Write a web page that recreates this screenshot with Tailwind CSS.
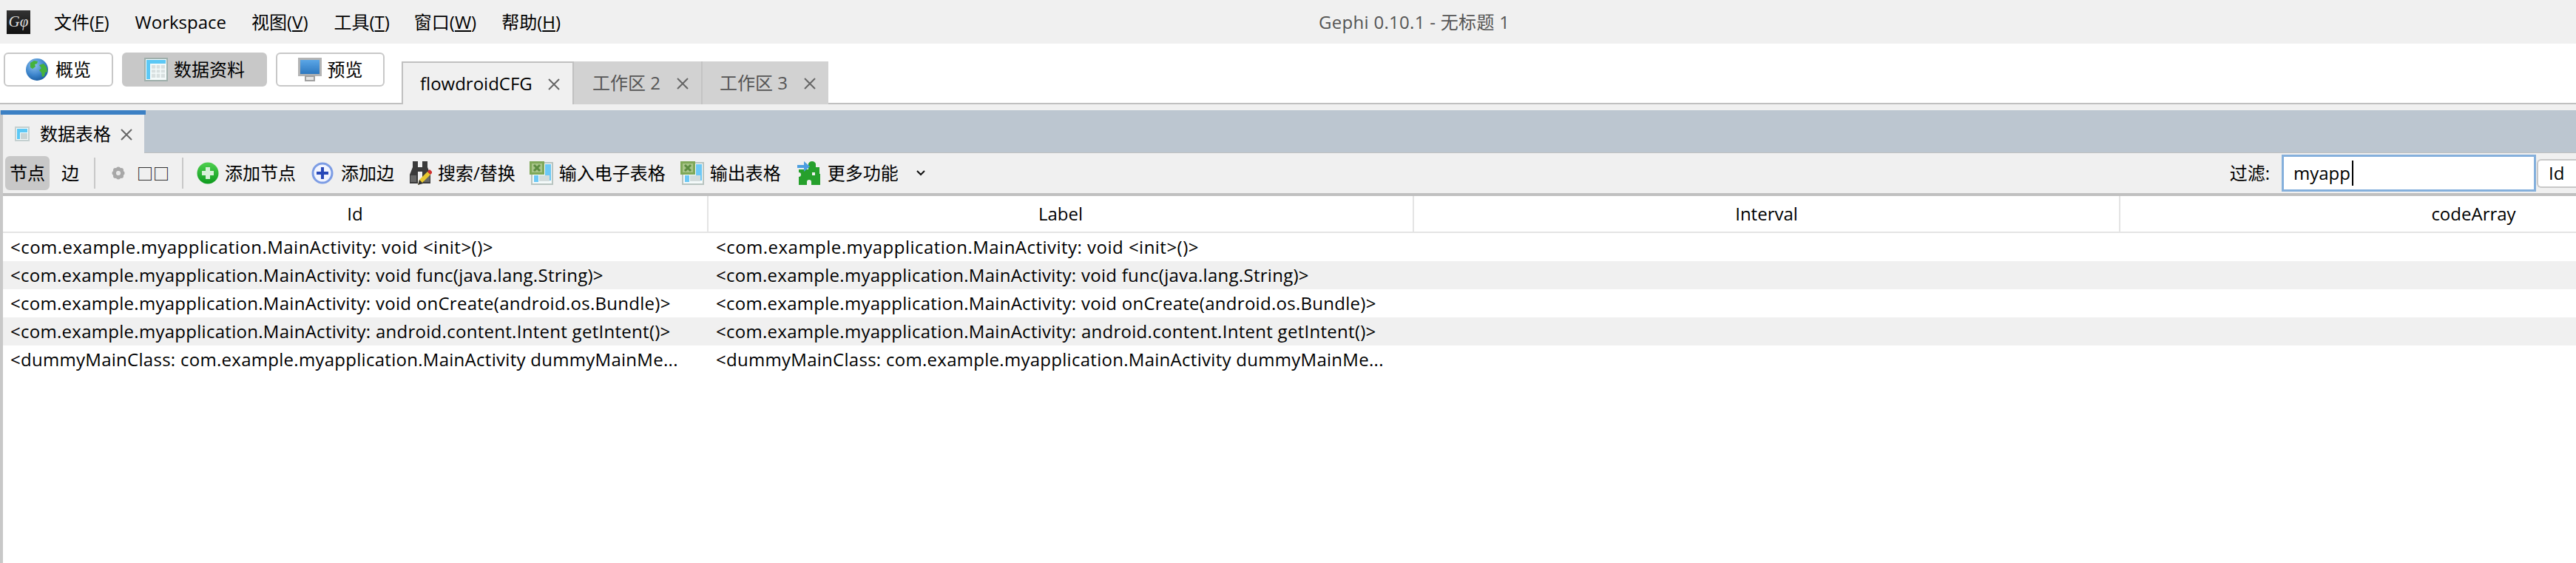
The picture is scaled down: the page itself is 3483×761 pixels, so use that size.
<!DOCTYPE html>
<html lang="zh-CN">
<head>
  <meta charset="UTF-8" />
  <script src="https://cdn.jsdelivr.net/npm/@tailwindcss/browser@4"></script>
  <title>Gephi 0.10.1 - 无标题 1</title>
</head>
<body class="bg-white h-[761px] w-[3483px] overflow-hidden text-[24px] text-black font-['Open_Sans','Noto_Sans_CJK_SC',sans-serif]">
  <!-- title bar -->
  <div class="relative flex items-center h-[59px] bg-[#f0f0f0]">
    <div class="ml-[9px] w-8 h-8 overflow-hidden bg-gradient-to-b from-[#333] to-[#111] text-[#ddd] flex items-center justify-center text-[21px] italic font-['Liberation_Serif',serif]">Gφ</div>
    <span class="ml-[32px]">文件(<u>F</u>)</span>
    <span class="ml-[35px]">Workspace</span>
    <span class="ml-[34px]">视图(<u>V</u>)</span>
    <span class="ml-[35px]">工具(<u>T</u>)</span>
    <span class="ml-[33px]">窗口(<u>W</u>)</span>
    <span class="ml-[34px]">帮助(<u>H</u>)</span>
    <span class="absolute left-[1783px] text-[#555] tracking-[0.3px]">Gephi 0.10.1 - 无标题 1</span>
  </div>

  <!-- perspective buttons and workspace tabs -->
  <div class="flex h-[82px] border-b-2 border-[#c0c0c0]">
    <div class="flex gap-3 pl-[5px] pt-3">
      <button class="flex items-center justify-center gap-[10px] w-[148px] h-[46px] rounded-md border-2 border-[#c8c8c8]">
        <svg width="30" height="30" viewBox="0 0 30 30"><defs><radialGradient id="globe" cx="38%" cy="30%" r="75%"><stop offset="0" stop-color="#8ec2ee"/><stop offset="0.6" stop-color="#3d85cc"/><stop offset="1" stop-color="#175a9e"/></radialGradient></defs><circle cx="15" cy="15" r="15" fill="url(#globe)"/><path d="M6 6l5-3 5 1-1 3-3 1 1 3-4 3-3-2zM18 9l6-2 4 5 1 6-3 1-1 5-3 1-1-6-3-3 3-3z" fill="#45b23c"/></svg>
        概览
      </button>
      <button class="flex items-center justify-center gap-2 w-[196px] h-[46px] rounded-md border-2 border-[#c8c8c8] bg-[#c8c8c8]">
        <svg width="32" height="32" viewBox="0 0 32 32"><rect width="32" height="32" fill="#9fb0ac"/><rect x="2" y="2" width="28" height="28" fill="#f4fafa"/><rect x="3" y="3" width="26" height="5" fill="#5cc8f5"/><rect x="3" y="3" width="5" height="26" fill="#5cc8f5"/><path d="M10 10h18v17H10z" fill="#d8e0e0"/><path d="M10 15.500h18M10 21h18M16 10v17M22 10v17" stroke="#f4fafa" stroke-width="1.500"/></svg>
        数据资料
      </button>
      <button class="flex items-center justify-center gap-2 w-[147px] h-[46px] rounded-md border-2 border-[#c8c8c8]">
        <svg width="32" height="32" viewBox="0 0 32 32"><defs><linearGradient id="screen" x1="0" y1="0" x2="0" y2="1"><stop offset="0" stop-color="#5ba6e6"/><stop offset="1" stop-color="#2d78c0"/></linearGradient></defs><rect y="0" width="32" height="25" fill="#b4b4b4"/><rect x="3" y="3" width="26" height="19" fill="url(#screen)"/><rect x="10" y="25" width="12" height="6" fill="#e4e4e4" stroke="#a0a0a0" stroke-width="2"/></svg>
        预览
      </button>
    </div>
    <div class="flex ml-[23px] mt-[24px] h-[58px]">
      <div class="flex items-center w-[233px] h-[58px] pl-[23px] bg-[#f0f0f0] border-2 border-b-0 border-[#c0c0c0]">
        <span>flowdroidCFG</span>
        <svg class="ml-[21px] mt-[2px]" width="16" height="16" viewBox="0 0 16 16"><path d="M1 1l14 14M15 1L1 15" stroke="#666" stroke-width="2"/></svg>
      </div>
      <div class="flex items-center w-[172px] pl-[25px] bg-[#d2d2d2] text-[#555]">
        <span>工作区 2</span>
        <svg class="ml-[22px] mt-[2px]" width="16" height="16" viewBox="0 0 16 16"><path d="M1 1l14 14M15 1L1 15" stroke="#666" stroke-width="2"/></svg>
      </div>
      <div class="flex items-center w-[172px] pl-[23px] bg-[#d2d2d2] text-[#555] border-l-2 border-[#c4c4c4]">
        <span>工作区 3</span>
        <svg class="ml-[22px] mt-[2px]" width="16" height="16" viewBox="0 0 16 16"><path d="M1 1l14 14M15 1L1 15" stroke="#666" stroke-width="2"/></svg>
      </div>
    </div>
  </div>

  <div class="h-2 bg-[#f0f0f0]"></div>

  <!-- data table panel -->
  <div class="h-[58px] bg-[#bcc6d0] border-b border-[#c0c0c0]">
    <div class="ml-[1px] w-[196px] h-[6px] bg-[#3c80c4]"></div>
    <div class="flex items-center w-[195px] h-[52px] bg-[#f0f0f0] border-l-4 border-[#c8c8c8] pl-[16px]">
      <svg width="20" height="20" viewBox="0 0 20 20"><rect width="20" height="20" fill="#c4d0d0"/><rect x="2" y="2" width="16" height="16" fill="#f4fafa"/><rect x="3" y="3" width="14" height="5" fill="#5cc8f5"/><rect x="3" y="3" width="4" height="14" fill="#5cc8f5"/><rect x="8" y="9" width="9" height="8" fill="#c8d4d4"/></svg>
      <span class="ml-[14px]">数据表格</span>
      <svg class="ml-[13px] mt-[2px]" width="16" height="16" viewBox="0 0 16 16"><path d="M1 1l14 14M15 1L1 15" stroke="#666" stroke-width="2"/></svg>
    </div>
  </div>

  <div class="border-l-4 border-[#c8c8c8] h-[554px]">
    <div class="flex items-center h-[58px] bg-[#f0f0f0] border-b-4 border-[#c0c0c0]">
      <div class="flex items-center justify-center ml-[3px] w-[60px] h-[46px] rounded-md bg-[#c8c8c8]">节点</div>
      <span class="ml-[16px]">边</span>
      <div class="ml-[20px] w-[2px] h-[42px] bg-[#c8c8c8]"></div>
      <svg class="ml-[22px]" width="18" height="18" viewBox="0 0 18 18"><g fill="#a8a8a8"><circle cx="9" cy="3.500" r="3"/><circle cx="9" cy="14.500" r="3"/><circle cx="3.500" cy="9" r="3"/><circle cx="14.500" cy="9" r="3"/><circle cx="5" cy="5" r="3"/><circle cx="13" cy="5" r="3"/><circle cx="5" cy="13" r="3"/><circle cx="13" cy="13" r="3"/></g><circle cx="9" cy="9" r="3" fill="#e8e8e8"/></svg>
      <span class="ml-[16px] w-[44px] text-[22px]">□□</span>
      <div class="ml-[17px] w-[2px] h-[42px] bg-[#c8c8c8]"></div>
      <svg class="ml-[18px]" width="30" height="30" viewBox="0 0 30 30"><defs><linearGradient id="greenball" x1="0" y1="0" x2="0" y2="1"><stop offset="0" stop-color="#4fd04f"/><stop offset="1" stop-color="#0e9a1e"/></linearGradient></defs><circle cx="15" cy="15" r="14.500" fill="url(#greenball)"/><path d="M12 7h6v5h5v6h-5v5h-6v-5H7v-6h5z" fill="#d8f0d8"/></svg>
      <span class="ml-[8px]">添加节点</span>
      <svg class="ml-[21px]" width="30" height="30" viewBox="0 0 30 30"><circle cx="15" cy="15" r="13" fill="#f2f5ff" stroke="#7c9ce4" stroke-width="3"/><path d="M13 7h4v6h6v4h-6v6h-4v-6H7v-4h6z" fill="#2848b8"/></svg>
      <span class="ml-[10px]">添加边</span>
      <svg class="ml-[19px]" width="32" height="32" viewBox="0 0 32 32"><path d="M6 0h7v8h6V0h7v8l4 10v12H19V14h-6v16H2V18l4-10z" fill="#3a3a3a"/><path d="M3 19h8v9H3zM21 19h8v9h-8z" fill="#666"/><path d="M13 32l2-7 11-11 4 4-11 11z" fill="#e8c830"/><path d="M26 14l3-3 4 4-3 3z" fill="#d03030"/><path d="M13 32l2-7 5 5z" fill="#333"/></svg>
      <span class="ml-[8px]">搜索/替换</span>
      <svg class="ml-[19px]" width="32" height="32" viewBox="0 0 32 32"><rect x="2" y="1" width="30" height="31" fill="#b8c4c0"/><rect x="4" y="3" width="26" height="27" fill="#f4fafa"/><path d="M21 4h8v22h-8zM6 19h6v9H6z" fill="#6cc8f5"/><path d="M13 19h14v8H13z" fill="#d4dcdc"/><rect width="20" height="18" fill="#7fa858"/><rect x="3" y="3" width="14" height="12" fill="#a8c488"/><path d="M6 5l8 8M14 5l-8 8" stroke="#5c8c40" stroke-width="3"/></svg>
      <span class="ml-[8px]">输入电子表格</span>
      <svg class="ml-[20px]" width="32" height="32" viewBox="0 0 32 32"><rect x="2" y="1" width="30" height="31" fill="#b8c4c0"/><rect x="4" y="3" width="26" height="27" fill="#f4fafa"/><path d="M21 4h8v22h-8zM6 19h6v9H6z" fill="#6cc8f5"/><path d="M13 19h14v8H13z" fill="#d4dcdc"/><rect width="20" height="18" fill="#7fa858"/><rect x="3" y="3" width="14" height="12" fill="#a8c488"/><path d="M6 5l8 8M14 5l-8 8" stroke="#5c8c40" stroke-width="3"/></svg>
      <span class="ml-[8px]">输出表格</span>
      <svg class="ml-[22px]" width="32" height="32" viewBox="0 0 32 32"><path d="M15 4a5 4 0 0 1 10 0v4h5v9h-6v-2h-4v4h4v-2h7v15H19v-4a3 3 0 0 0-6 0v4H2V21a3 3 0 1 0 0-6v-4h13z" fill="#26a02c"/><path d="M0 5h9V0l8 7-8 7v-5H0z" fill="#4c9ee0"/></svg>
      <span class="ml-[9px]">更多功能</span>
      <svg class="ml-[24px]" width="12" height="8" viewBox="0 0 12 8"><path d="M1 1l5 5 5-5" fill="none" stroke="#111" stroke-width="2"/></svg>
      <span class="ml-auto">过滤:</span>
      <div class="flex items-center ml-[16px] w-[344px] h-[50px] pl-[13px] bg-white border-[3px] border-[#85b0dc]">myapp<span class="ml-[2px] w-[2px] h-[34px] bg-black"></span></div>
      <div class="flex items-center ml-[1px] w-[53px] h-[39px] pl-[14px] bg-white border-2 border-r-0 border-[#c8c8c8] rounded-l-md">Id</div>
    </div>

    <div class="flex h-[50px] border-b-2 border-[#e4e4e4]">
      <div class="flex items-center justify-center w-[954px] shrink-0 border-r-2 border-[#e4e4e4]">Id</div>
      <div class="flex items-center justify-center w-[954px] shrink-0 border-r-2 border-[#e4e4e4]">Label</div>
      <div class="flex items-center justify-center w-[955px] shrink-0 border-r-2 border-[#e4e4e4]">Interval</div>
      <div class="flex-1 overflow-hidden"><div class="flex items-center justify-center w-[955px] h-full">codeArray</div></div>
    </div>

    <div class="grid grid-cols-[954px_auto] auto-rows-[38px] items-center tracking-[0.28px]">
      <div class="pl-[10px] tracking-[0.48px]">&lt;com.example.myapplication.MainActivity: void &lt;init&gt;()&gt;</div>
      <div class="pl-[10px] tracking-[0.48px]">&lt;com.example.myapplication.MainActivity: void &lt;init&gt;()&gt;</div>
      <div class="pl-[10px] h-full flex items-center bg-[#f0f0f0]">&lt;com.example.myapplication.MainActivity: void func(java.lang.String)&gt;</div>
      <div class="pl-[10px] h-full flex items-center bg-[#f0f0f0]">&lt;com.example.myapplication.MainActivity: void func(java.lang.String)&gt;</div>
      <div class="pl-[10px]">&lt;com.example.myapplication.MainActivity: void onCreate(android.os.Bundle)&gt;</div>
      <div class="pl-[10px]">&lt;com.example.myapplication.MainActivity: void onCreate(android.os.Bundle)&gt;</div>
      <div class="pl-[10px] h-full flex items-center bg-[#f0f0f0]">&lt;com.example.myapplication.MainActivity: android.content.Intent getIntent()&gt;</div>
      <div class="pl-[10px] h-full flex items-center bg-[#f0f0f0]">&lt;com.example.myapplication.MainActivity: android.content.Intent getIntent()&gt;</div>
      <div class="pl-[10px]">&lt;dummyMainClass: com.example.myapplication.MainActivity dummyMainMe...</div>
      <div class="pl-[10px]">&lt;dummyMainClass: com.example.myapplication.MainActivity dummyMainMe...</div>
    </div>
  </div>
</body>
</html>
